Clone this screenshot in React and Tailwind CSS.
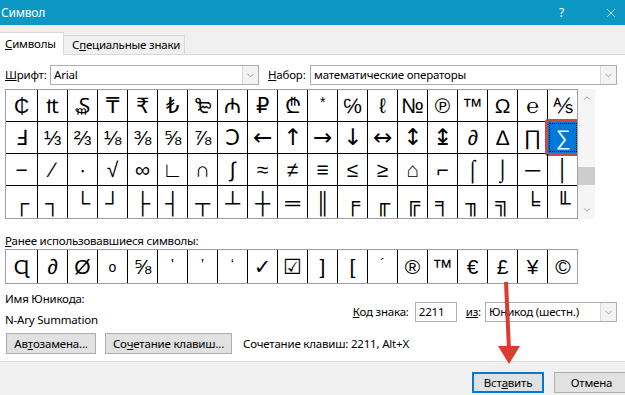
import React from "react";
import { ChevronDown, ChevronUp, X } from "lucide-react";

const rows = [
  ["₵", "₶", "₷", "₸", "₹", "₺", "₻", "₼", "₽", "₾", "*", "℅", "ℓ", "№", "℗", "™", "Ω", "℮", "⅍"],
  ["Ⅎ", "⅓", "⅔", "⅛", "⅜", "⅝", "⅞", "Ↄ", "←", "↑", "→", "↓", "↔", "↕", "↨", "∂", "∆", "∏", "∑"],
  ["−", "∕", "∙", "√", "∞", "∟", "∩", "∫", "≈", "≠", "≡", "≤", "≥", "⌂", "⌐", "⌠", "⌡", "─", "│"],
  ["┌", "┐", "└", "┘", "├", "┤", "┬", "┴", "┼", "═", "║", "╒", "╓", "╔", "╕", "╖", "╗", "╘", "╙"],
];

const recent = ["Ɋ", "∂", "Ø", "o", "⅝", "'", "’", "‘", "✓", "☑", "]", "[", "´", "®", "™", "€", "£", "¥", "©"];

const arrows = ["←", "↑", "→", "↓", "↔", "↕", "↨"];
const sym = "font-['Liberation_Sans','DejaVu_Sans',sans-serif]";
const symArrow = "font-['DejaVu_Sans',sans-serif]";

function Select({ value, className }) {
  return (
    <div className={`h-[20px] flex border border-[#abadb3] bg-white ${className}`}>
      <div className="flex-1 pl-[3px] flex items-center truncate whitespace-nowrap">{value}</div>
      <div className="w-[16px] flex items-center justify-center border-l border-[#d9d9d9] bg-[#f3f3f3]">
        <ChevronDown size={11} strokeWidth={1.5} className="text-[#7a7a7a]" />
      </div>
    </div>
  );
}

function Cell({ ch, first, last, bottom, selected }) {
  const w = first ? "w-[32px]" : "w-[30px]";
  const isArrow = arrows.includes(ch);
  return (
    <div
      className={`relative ${w} h-[32px] shrink-0 flex items-center justify-center ${
        last ? "" : "border-r"
      } ${bottom ? "" : "border-b"} border-black leading-none ${
        selected ? "bg-[#0078d7] text-[#e8f6ff]" : "text-black"
      }`}
    >
      {ch === "*" ? (
        <span className={`text-[14px] self-start mt-[5px] ${sym}`}>{ch}</span>
      ) : (
        <span className={isArrow ? `text-[23px] ${symArrow}` : `text-[21px] ${sym}`}>{ch}</span>
      )}
      {selected && (
        <>
          <div className="absolute inset-[1px] border border-dotted border-black" />
          <div className="absolute -left-[3px] -top-[3px] w-[36px] h-[37px] border-[3px] border-[#c24c45] rounded-[3px]" />
        </>
      )}
    </div>
  );
}

function Btn({ children, className }) {
  return (
    <div className={`h-[21px] flex items-center justify-center whitespace-nowrap bg-[#e1e1e1] border border-[#adadad] ${className}`}>
      {children}
    </div>
  );
}

function recentGlyph(ch) {
  if (ch === "o") return <span className="text-[14px]">{ch}</span>;
  if (ch === "'" || ch === "’" || ch === "‘" || ch === "´")
    return <span className="text-[15px] self-start mt-[6px]">{ch}</span>;
  return <span className="text-[21px]">{ch}</span>;
}

export default function App() {
  return (
    <div className="relative w-[625px] h-[395px] overflow-hidden flex flex-col bg-white text-[11.5px] tracking-[-0.2px] text-black font-['Noto_Sans',sans-serif]">
      {/* title */}
      <div className="h-[25px] shrink-0 bg-[#0d97c3] text-white flex items-center pl-[1px] pr-[7px]">
        <span className="text-[12px]">Символ</span>
        <span className="ml-auto mr-[40px] text-[12px]">?</span>
        <X size={14} strokeWidth={1.2} />
      </div>

      {/* tabs */}
      <div className="h-[30px] shrink-0 bg-[#f0f0f0] flex items-end border-b border-[#d9d9d9]">
        <div className="w-[64px] h-[23px] -mb-px bg-white border-t border-r border-[#d9d9d9] pl-[5px] flex items-center whitespace-nowrap">
          <span><u>С</u>имволы</span>
        </div>
        <div className="w-[121px] h-[19px] bg-[#f0f0f0] border-t border-r border-[#d9d9d9] pl-[8px] flex items-center whitespace-nowrap">
          <span>С<u>п</u>ециальные знаки</span>
        </div>
      </div>

      {/* content */}
      <div className="flex-1 bg-white pl-[5px] pr-[8px] flex flex-col">
        <div className="mt-[10px] h-[20px] flex items-center whitespace-nowrap">
          <span className="w-[45px]"><u>Ш</u>рифт:</span>
          <Select value="Arial" className="w-[209px]" />
          <span className="ml-[9px] w-[42px]"><u>Н</u>абор:</span>
          <Select value="математические операторы" className="flex-1" />
        </div>

        {/* symbol grid */}
        <div className="mt-[4px] flex">
          <div className="w-[573px] border border-[#a0a0a0] overflow-hidden">
            {rows.map((r, ri) => (
              <div key={ri} className="flex">
                {r.map((ch, ci) => (
                  <Cell
                    key={ci}
                    ch={ch}
                    first={ci === 0}
                    last={ci === r.length - 1}
                    bottom={ri === rows.length - 1}
                    selected={ri === 1 && ci === 18}
                  />
                ))}
              </div>
            ))}
          </div>
          <div className="w-[17px] bg-[#f5f5f5] flex flex-col items-center">
            <ChevronUp size={10} strokeWidth={1.5} className="mt-[4px] text-[#606060]" />
            <div className="mt-[64px] w-[17px] h-[18px] bg-[#cdcdcd]" />
            <ChevronDown size={10} strokeWidth={1.5} className="mt-auto mb-[4px] text-[#606060]" />
          </div>
        </div>

        <div className="mt-[14px] h-[16px] leading-[16px] whitespace-nowrap">
          <u>Р</u>анее использовавшиеся символы:
        </div>

        {/* recent symbols */}
        <div className="w-[573px] border border-[#a0a0a0] flex overflow-hidden">
          {recent.map((ch, i) => (
            <div
              key={i}
              className={`${i === 0 ? "w-[32px]" : "w-[30px]"} h-[33px] shrink-0 flex items-center justify-center ${
                i === recent.length - 1 ? "" : "border-r"
              } border-black leading-none tracking-normal ${sym}`}
            >
              {recentGlyph(ch)}
            </div>
          ))}
        </div>

        {/* unicode name + code */}
        <div className="mt-[7px] flex whitespace-nowrap">
          <div className="flex flex-col">
            <span className="h-[16px] leading-[16px]">Имя Юникода:</span>
            <span className="mt-[5px] h-[16px] leading-[16px]">N-Ary Summation</span>
          </div>
          <div className="ml-auto mt-[11px] flex items-center h-[20px]">
            <span><u>К</u>од знака:</span>
            <div className="ml-[6px] w-[42px] h-[20px] border border-[#abadb3] pl-[3px] flex items-center">2211</div>
            <span className="ml-[9px]"><u>из</u>:</span>
            <Select value="Юникод (шестн.)" className="ml-[4px] w-[132px]" />
          </div>
        </div>

        <div className="mt-[5px] flex items-center whitespace-nowrap">
          <Btn className="ml-[1px] w-[90px]">Ав<u>т</u>озамена...</Btn>
          <Btn className="ml-[9px] w-[127px]">Со<u>ч</u>етание клавиш...</Btn>
          <span className="ml-[11px]">Сочетание клавиш: 2211, Alt+X</span>
        </div>
      </div>

      {/* footer */}
      <div className="h-[34px] shrink-0 bg-[#f0f0f0] border-t border-[#dfdfdf] flex items-start justify-end pt-[10px] -mr-[4px]">
        <div className="w-[72px] h-[21px] flex items-center justify-center bg-[#e1e1e1] border-2 border-[#0078d7]">
          Вст<u>а</u>вить
        </div>
        <Btn className="ml-[10px] w-[75px]">Отмена</Btn>
      </div>

      {/* red annotation arrow */}
      <svg className="absolute left-0 top-0 pointer-events-none" width="625" height="395">
        <line x1="506" y1="282" x2="509" y2="350" stroke="#dc3b30" strokeWidth="4" />
        <polygon points="498,346 520,346 509,364" fill="#dc3b30" />
      </svg>
    </div>
  );
}
